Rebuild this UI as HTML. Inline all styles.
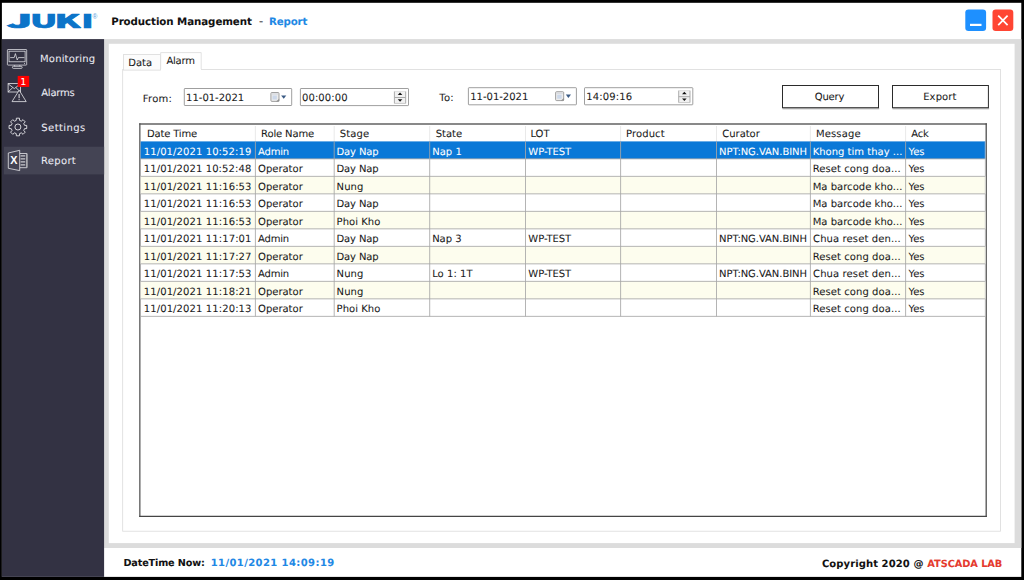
<!DOCTYPE html>
<html lang="en"><head><meta charset="utf-8"><title>Production Management - Report</title>
<style>
html,body{margin:0;padding:0;background:#000;}
body{width:1024px;height:580px;overflow:hidden;position:relative;font-family:"DejaVu Sans", "Liberation Sans", sans-serif;font-size:10px;color:#1a1a1a;}
#app{position:absolute;left:0;top:0;width:1024px;height:580px;overflow:hidden;}
#shapes{position:absolute;left:0;top:0;}
.g{position:absolute;left:0;top:0;width:0;height:0;}
.t{position:absolute;white-space:pre;line-height:12px;height:12px;text-rendering:geometricPrecision;-webkit-text-stroke:0.06px currentColor;}
</style></head><body><div id="app">
<svg id="shapes" width="1024" height="580" viewBox="0 0 1024 580">
<rect x="0" y="0" width="1024" height="580" fill="#000"/>
<rect x="1.9" y="2.8" width="1019.4" height="574.1" fill="#fff"/>
<rect x="104.1" y="39.1" width="917.2" height="508.9" fill="#dcdcdc"/>
<rect x="108.8" y="43.8" width="905.8" height="499.3" fill="#fff"/>
<rect x="1.9" y="39.1" width="102.2" height="537.8" fill="#333243"/>
<rect x="3.9" y="146.7" width="100.2" height="27.7" fill="#444454"/>
<rect x="965.3" y="9.4" width="20.8" height="21.5" rx="3.2" fill="#1e90ff"/>
<rect x="970" y="23.8" width="11.5" height="2.2" fill="#fff"/>
<rect x="992.5" y="9.4" width="20.8" height="21.5" rx="3.2" fill="#ff4533"/>
<path d="M998.2 15.6L1007.6 25.2M1007.6 15.6L998.2 25.2" stroke="#fff" stroke-width="1.7" fill="none"/>
<rect x="122.7" y="69.5" width="877.7" height="461.7" fill="#fff" stroke="#dadada" stroke-width="0.8"/>
<rect x="123.4" y="54.6" width="37.1" height="15.5" fill="#fcfcfc" stroke="#dadada" stroke-width="0.8"/>
<path d="M160.7 69.9V52.6H201.2V69.9" fill="#fff" stroke="#dadada" stroke-width="0.8"/>
<rect x="161.1" y="68.9" width="39.7" height="1.4" fill="#fff"/>
<rect x="184.3" y="88.5" width="107.4" height="17" fill="#fff" stroke="#868686" stroke-width="0.8" rx="0.6"/>
<g transform="translate(270.5,92.1)"><rect x="0.4" y="0.4" width="8.1" height="8.9" rx="1" fill="#ececec" stroke="#8a8a8a" stroke-width="0.8"/><rect x="1.3" y="1.3" width="6.3" height="1.2" fill="#d4d8de"/><rect x="2" y="3.4" width="4.4" height="4" fill="#c9d6ea" opacity="0.9"/><path d="M5.6 9.5L8.7 6.6V9.5Z" fill="#8f8f8f"/></g>
<path d="M281.1 95.4h5.2l-2.6 3.3z" fill="#3a5a84"/>
<rect x="300.4" y="88.5" width="108.1" height="17.1" fill="#fff" stroke="#868686" stroke-width="0.8" rx="0.6"/>
<rect x="394.4" y="91.4" width="11.3" height="12" fill="#f1f1f1"/>
<line x1="394.4" y1="91.4" x2="394.4" y2="103.4" stroke="#a4a4a4" stroke-width="0.9"/>
<line x1="405.7" y1="91.4" x2="405.7" y2="103.4" stroke="#a4a4a4" stroke-width="0.9"/>
<line x1="394.4" y1="103.4" x2="405.7" y2="103.4" stroke="#bdbdbd" stroke-width="0.8"/>
<line x1="394.4" y1="91.4" x2="405.7" y2="91.4" stroke="#d6d6d6" stroke-width="0.7"/>
<line x1="394.4" y1="97.5" x2="405.7" y2="97.5" stroke="#a9a9a9" stroke-width="1"/>
<path d="M397.75 95h4.6l-2.3 -2.5z" fill="#111"/>
<path d="M397.75 99.2h4.6l-2.3 2.6z" fill="#111"/>
<rect x="468.4" y="87.7" width="108" height="17.1" fill="#fff" stroke="#868686" stroke-width="0.8" rx="0.6"/>
<g transform="translate(555.2,91.3)"><rect x="0.4" y="0.4" width="8.1" height="8.9" rx="1" fill="#ececec" stroke="#8a8a8a" stroke-width="0.8"/><rect x="1.3" y="1.3" width="6.3" height="1.2" fill="#d4d8de"/><rect x="2" y="3.4" width="4.4" height="4" fill="#c9d6ea" opacity="0.9"/><path d="M5.6 9.5L8.7 6.6V9.5Z" fill="#8f8f8f"/></g>
<path d="M565.8 94.6h5.2l-2.6 3.3z" fill="#3a5a84"/>
<rect x="584.5" y="87.7" width="108.3" height="17.1" fill="#fff" stroke="#868686" stroke-width="0.8" rx="0.6"/>
<rect x="678.7" y="90.6" width="11.3" height="12" fill="#f1f1f1"/>
<line x1="678.7" y1="90.6" x2="678.7" y2="102.6" stroke="#a4a4a4" stroke-width="0.9"/>
<line x1="690" y1="90.6" x2="690" y2="102.6" stroke="#a4a4a4" stroke-width="0.9"/>
<line x1="678.7" y1="102.6" x2="690" y2="102.6" stroke="#bdbdbd" stroke-width="0.8"/>
<line x1="678.7" y1="90.6" x2="690" y2="90.6" stroke="#d6d6d6" stroke-width="0.7"/>
<line x1="678.7" y1="96.7" x2="690" y2="96.7" stroke="#a9a9a9" stroke-width="1"/>
<path d="M682.05 94.2h4.6l-2.3 -2.5z" fill="#111"/>
<path d="M682.05 98.4h4.6l-2.3 2.6z" fill="#111"/>
<line x1="782.5" y1="108.8" x2="879.3" y2="108.8" stroke="#9a9a9a" stroke-width="0.9"/>
<rect x="782.5" y="85.5" width="96" height="22.2" fill="#fff" stroke="#2b2b2b" stroke-width="1"/>
<line x1="892.5" y1="108.8" x2="989.2" y2="108.8" stroke="#9a9a9a" stroke-width="0.9"/>
<rect x="892.5" y="85.5" width="95.9" height="22.2" fill="#fff" stroke="#2b2b2b" stroke-width="1"/>
<rect x="139.3" y="123.3" width="847.5" height="393.6" fill="#fff"/>
<line x1="139.25" y1="124.05" x2="986.8" y2="124.05" stroke="#626262" stroke-width="1.5"/>
<line x1="139.85" y1="123.3" x2="139.85" y2="516.95" stroke="#525252" stroke-width="1.25"/>
<line x1="986.2" y1="123.3" x2="986.2" y2="516.95" stroke="#4e4e4e" stroke-width="1.3"/>
<line x1="139.25" y1="516.4" x2="986.8" y2="516.4" stroke="#454545" stroke-width="1.1"/>
<line x1="255.4" y1="126" x2="255.4" y2="141" stroke="#e6e6e6" stroke-width="0.9"/>
<line x1="334.2" y1="126" x2="334.2" y2="141" stroke="#e6e6e6" stroke-width="0.9"/>
<line x1="429.7" y1="126" x2="429.7" y2="141" stroke="#e6e6e6" stroke-width="0.9"/>
<line x1="525.5" y1="126" x2="525.5" y2="141" stroke="#e6e6e6" stroke-width="0.9"/>
<line x1="620.6" y1="126" x2="620.6" y2="141" stroke="#e6e6e6" stroke-width="0.9"/>
<line x1="716.5" y1="126" x2="716.5" y2="141" stroke="#e6e6e6" stroke-width="0.9"/>
<line x1="810.4" y1="126" x2="810.4" y2="141" stroke="#e6e6e6" stroke-width="0.9"/>
<line x1="905.6" y1="126" x2="905.6" y2="141" stroke="#e6e6e6" stroke-width="0.9"/>
<rect x="140.65" y="141.4" width="844.85" height="17.5" fill="#0a78d7"/>
<rect x="140.65" y="176.4" width="844.85" height="17.5" fill="#fdfdee"/>
<rect x="140.65" y="211.4" width="844.85" height="17.5" fill="#fdfdee"/>
<rect x="140.65" y="246.4" width="844.85" height="17.5" fill="#fdfdee"/>
<rect x="140.65" y="281.4" width="844.85" height="17.5" fill="#fdfdee"/>
<line x1="140.65" y1="158.85" x2="985.5" y2="158.85" stroke="#a6a6a6" stroke-width="0.85"/>
<line x1="140.65" y1="176.35" x2="985.5" y2="176.35" stroke="#a6a6a6" stroke-width="0.85"/>
<line x1="140.65" y1="193.85" x2="985.5" y2="193.85" stroke="#a6a6a6" stroke-width="0.85"/>
<line x1="140.65" y1="211.35" x2="985.5" y2="211.35" stroke="#a6a6a6" stroke-width="0.85"/>
<line x1="140.65" y1="228.85" x2="985.5" y2="228.85" stroke="#a6a6a6" stroke-width="0.85"/>
<line x1="140.65" y1="246.35" x2="985.5" y2="246.35" stroke="#a6a6a6" stroke-width="0.85"/>
<line x1="140.65" y1="263.85" x2="985.5" y2="263.85" stroke="#a6a6a6" stroke-width="0.85"/>
<line x1="140.65" y1="281.35" x2="985.5" y2="281.35" stroke="#a6a6a6" stroke-width="0.85"/>
<line x1="140.65" y1="298.85" x2="985.5" y2="298.85" stroke="#a6a6a6" stroke-width="0.85"/>
<line x1="140.65" y1="316.35" x2="985.5" y2="316.35" stroke="#a6a6a6" stroke-width="0.85"/>
<line x1="255.4" y1="141.4" x2="255.4" y2="316.4" stroke="#a6a6a6" stroke-width="0.85"/>
<line x1="334.2" y1="141.4" x2="334.2" y2="316.4" stroke="#a6a6a6" stroke-width="0.85"/>
<line x1="429.7" y1="141.4" x2="429.7" y2="316.4" stroke="#a6a6a6" stroke-width="0.85"/>
<line x1="525.5" y1="141.4" x2="525.5" y2="316.4" stroke="#a6a6a6" stroke-width="0.85"/>
<line x1="620.6" y1="141.4" x2="620.6" y2="316.4" stroke="#a6a6a6" stroke-width="0.85"/>
<line x1="716.5" y1="141.4" x2="716.5" y2="316.4" stroke="#a6a6a6" stroke-width="0.85"/>
<line x1="810.4" y1="141.4" x2="810.4" y2="316.4" stroke="#a6a6a6" stroke-width="0.85"/>
<line x1="905.6" y1="141.4" x2="905.6" y2="316.4" stroke="#a6a6a6" stroke-width="0.85"/>
<line x1="985.2" y1="141.4" x2="985.2" y2="316.4" stroke="#c8c8c8" stroke-width="0.6"/>
<g fill="none" stroke="#e6e6ea" stroke-width="0.75"><rect x="7.4" y="49.5" width="19.3" height="15.6" rx="0.6"/><rect x="9" y="51.2" width="16.1" height="10.6"/><path d="M10.2 57.6h4l1.2 -4 1.8 6.4 1.2 -2.4h6"/><path d="M24 63.6h1"/><rect x="12.4" y="66.3" width="9.8" height="2.1" rx="1"/><path d="M14.6 65.2v1.1M19.8 65.2v1.1"/></g>
<g fill="none" stroke="#e6e6ea" stroke-width="0.8"><rect x="8.1" y="83.6" width="12.4" height="8.4"/><path d="M8.1 83.8l6.2 4.8 6.2 -4.8M8.1 92l4.6 -4.4M20.5 92l-4.6 -4.4"/><path d="M19.2 90.2L26.2 101.6H12L19.2 90.2Z" fill="#333243"/><path d="M19.1 94v4.2M19.1 99.2v1" stroke-width="1"/></g>
<rect x="17.7" y="75.9" width="11.5" height="11" fill="#ff0000"/>
<g fill="none" stroke="#e6e6ea" stroke-width="0.9" stroke-linejoin="round"><path d="M16.36 118.18 L19.44 118.18 L19.59 120.41 L21.36 121.15 L23.05 119.68 L25.22 121.85 L23.75 123.54 L24.49 125.31 L26.72 125.46 L26.72 128.54 L24.49 128.69 L23.75 130.46 L25.22 132.15 L23.05 134.32 L21.36 132.85 L19.59 133.59 L19.44 135.82 L16.36 135.82 L16.21 133.59 L14.44 132.85 L12.75 134.32 L10.58 132.15 L12.05 130.46 L11.31 128.69 L9.08 128.54 L9.08 125.46 L11.31 125.31 L12.05 123.54 L10.58 121.85 L12.75 119.68 L14.44 121.15 L16.21 120.41Z"/><circle cx="17.9" cy="127.0" r="3.0"/></g>
<g fill="none" stroke="#e6e6ea" stroke-width="0.8" stroke-linejoin="round"><path d="M8.3 153L19.7 150.3V170.6L8.3 168.3Z"/><path d="M19.9 153.5h7.1v14.2h-7.1"/><path d="M20.6 155.9h4.6M20.6 158.9h4.6M20.6 161.9h4.6M20.6 164.9h4.6" stroke-width="1.1" stroke="#c9c9ce"/><path d="M26.6 153.7v13.8" stroke-width="1.3" stroke="#a9a9ae"/></g>
<text x="10.3" y="164.1" textLength="7.2" lengthAdjust="spacingAndGlyphs" fill="#fff" style="font:bold 10px 'Liberation Sans','DejaVu Sans',sans-serif">X</text>
</svg>
<svg class="logo" style="position:absolute;left:0;top:0" width="104" height="39" viewBox="0 0 104 39"><g fill="#0b74c9" stroke="#0b74c9" stroke-width="0.7" stroke-linejoin="miter" stroke-miterlimit="2" style="font:900 18.13px 'Noto Sans CJK JP','Liberation Sans',sans-serif"><text transform="translate(6.87 28.10) scale(2.403 1)" x="0" y="0">J</text><text transform="translate(30.16 28.10) scale(1.943 1)" x="0" y="0">U</text><text transform="translate(54.83 28.10) scale(2.001 1)" x="0" y="0">K</text><text transform="translate(81.39 28.10) scale(1.877 1)" x="0" y="0">I</text></g><text x="92.6" y="19.3" style="font:6.6px 'Liberation Sans',sans-serif" fill="#5aa0dc">®</text></svg>
<header class="g header">
<span class="t" style="left:111.20px;top:16px;font-size:10.25px;font-weight:bold;color:#111;letter-spacing:-0.07px;">Production Management</span>
<span class="t" style="left:258.95px;top:15px;font-size:11.5px;color:#3d3d3d;">-</span>
<span class="t" style="left:268.95px;top:16px;font-size:10.25px;font-weight:bold;color:#1e88e5;letter-spacing:-0.16px;">Report</span>
</header>
<nav class="g nav">
<span class="t" style="left:40.05px;top:54px;color:#ebebf3;letter-spacing:0.17px;">Monitoring</span>
<span class="t" style="left:41.24px;top:88px;color:#ebebf3;letter-spacing:-0.22px;">Alarms</span>
<span class="t" style="left:41.35px;top:123px;color:#ebebf3;letter-spacing:0.42px;">Settings</span>
<span class="t" style="left:41.05px;top:156px;color:#ebebf3;letter-spacing:0.31px;">Report</span>
<span class="t" style="left:20.35px;top:77px;font-size:9.5px;color:#fff;">1</span>
</nav>
<div class="g tabs">
<span class="t" style="left:128.20px;top:58px;letter-spacing:0.05px;">Data</span>
<span class="t" style="left:166.40px;top:56px;letter-spacing:-0.22px;">Alarm</span>
</div>
<div class="g filters">
<span class="t" style="left:142.85px;top:94px;letter-spacing:0.23px;">From:</span>
<span class="t" style="left:186.10px;top:93px;letter-spacing:-0.01px;">11-01-2021</span>
<span class="t" style="left:302.00px;top:93px;letter-spacing:0.09px;">00:00:00</span>
<span class="t" style="left:439.20px;top:93px;letter-spacing:0.31px;">To:</span>
<span class="t" style="left:470.25px;top:92px;letter-spacing:-0.01px;">11-01-2021</span>
<span class="t" style="left:586.35px;top:92px;letter-spacing:0.14px;">14:09:16</span>
<span class="t" style="left:814.75px;top:92px;letter-spacing:-0.19px;">Query</span>
<span class="t" style="left:923.20px;top:92px;letter-spacing:0.11px;">Export</span>
</div>
<div class="g grid">
<span class="t" style="left:147.05px;top:129px;letter-spacing:-0.19px;">Date Time</span>
<span class="t" style="left:261.05px;top:129px;letter-spacing:-0.13px;">Role Name</span>
<span class="t" style="left:339.75px;top:129px;letter-spacing:0.11px;">Stage</span>
<span class="t" style="left:435.75px;top:129px;letter-spacing:-0.03px;">State</span>
<span class="t" style="left:530.45px;top:129px;letter-spacing:-0.04px;">LOT</span>
<span class="t" style="left:626.05px;top:129px;letter-spacing:0.10px;">Product</span>
<span class="t" style="left:722.35px;top:129px;letter-spacing:-0.04px;">Curator</span>
<span class="t" style="left:815.95px;top:129px;letter-spacing:0.14px;">Message</span>
<span class="t" style="left:911.29px;top:129px;letter-spacing:-0.22px;">Ack</span>
<span class="t" style="left:143.75px;top:147px;color:#fff;letter-spacing:0.10px;">11/01/2021 10:52:19</span>
<span class="t" style="left:258.07px;top:147px;color:#fff;letter-spacing:-0.22px;">Admin</span>
<span class="t" style="left:336.55px;top:147px;color:#fff;letter-spacing:-0.14px;">Day Nap</span>
<span class="t" style="left:432.15px;top:147px;color:#fff;letter-spacing:0.04px;">Nap 1</span>
<span class="t" style="left:528.35px;top:147px;color:#fff;letter-spacing:-0.08px;">WP-TEST</span>
<span class="t" style="left:719.05px;top:147px;color:#fff;letter-spacing:-0.06px;">NPT:NG.VAN.BINH</span>
<span class="t" style="left:812.65px;top:147px;color:#fff;letter-spacing:0.01px;">Khong tim thay ...</span>
<span class="t" style="left:908.55px;top:147px;color:#fff;letter-spacing:-0.12px;">Yes</span>
<span class="t" style="left:143.75px;top:164px;letter-spacing:0.10px;">11/01/2021 10:52:48</span>
<span class="t" style="left:258.05px;top:164px;letter-spacing:-0.01px;">Operator</span>
<span class="t" style="left:336.55px;top:164px;letter-spacing:-0.14px;">Day Nap</span>
<span class="t" style="left:812.65px;top:164px;letter-spacing:0.08px;">Reset cong doa...</span>
<span class="t" style="left:908.55px;top:164px;letter-spacing:-0.12px;">Yes</span>
<span class="t" style="left:143.75px;top:182px;letter-spacing:0.11px;">11/01/2021 11:16:53</span>
<span class="t" style="left:258.05px;top:182px;letter-spacing:-0.01px;">Operator</span>
<span class="t" style="left:336.55px;top:182px;letter-spacing:0.11px;">Nung</span>
<span class="t" style="left:812.65px;top:182px;letter-spacing:0.03px;">Ma barcode kho...</span>
<span class="t" style="left:908.55px;top:182px;letter-spacing:-0.12px;">Yes</span>
<span class="t" style="left:143.75px;top:199px;letter-spacing:0.11px;">11/01/2021 11:16:53</span>
<span class="t" style="left:258.05px;top:199px;letter-spacing:-0.01px;">Operator</span>
<span class="t" style="left:336.55px;top:199px;letter-spacing:-0.14px;">Day Nap</span>
<span class="t" style="left:812.65px;top:199px;letter-spacing:0.03px;">Ma barcode kho...</span>
<span class="t" style="left:908.55px;top:199px;letter-spacing:-0.12px;">Yes</span>
<span class="t" style="left:143.75px;top:217px;letter-spacing:0.11px;">11/01/2021 11:16:53</span>
<span class="t" style="left:258.05px;top:217px;letter-spacing:-0.01px;">Operator</span>
<span class="t" style="left:336.55px;top:217px;letter-spacing:0.05px;">Phoi Kho</span>
<span class="t" style="left:812.65px;top:217px;letter-spacing:0.03px;">Ma barcode kho...</span>
<span class="t" style="left:908.55px;top:217px;letter-spacing:-0.12px;">Yes</span>
<span class="t" style="left:143.75px;top:234px;letter-spacing:0.11px;">11/01/2021 11:17:01</span>
<span class="t" style="left:258.07px;top:234px;letter-spacing:-0.22px;">Admin</span>
<span class="t" style="left:336.55px;top:234px;letter-spacing:-0.14px;">Day Nap</span>
<span class="t" style="left:432.15px;top:234px;letter-spacing:-0.01px;">Nap 3</span>
<span class="t" style="left:528.35px;top:234px;letter-spacing:-0.08px;">WP-TEST</span>
<span class="t" style="left:719.05px;top:234px;letter-spacing:-0.06px;">NPT:NG.VAN.BINH</span>
<span class="t" style="left:813.05px;top:234px;letter-spacing:0.11px;">Chua reset den...</span>
<span class="t" style="left:908.55px;top:234px;letter-spacing:-0.12px;">Yes</span>
<span class="t" style="left:143.75px;top:252px;letter-spacing:0.11px;">11/01/2021 11:17:27</span>
<span class="t" style="left:258.05px;top:252px;letter-spacing:-0.01px;">Operator</span>
<span class="t" style="left:336.55px;top:252px;letter-spacing:-0.14px;">Day Nap</span>
<span class="t" style="left:812.65px;top:252px;letter-spacing:0.08px;">Reset cong doa...</span>
<span class="t" style="left:908.55px;top:252px;letter-spacing:-0.12px;">Yes</span>
<span class="t" style="left:143.75px;top:269px;letter-spacing:0.11px;">11/01/2021 11:17:53</span>
<span class="t" style="left:258.07px;top:269px;letter-spacing:-0.22px;">Admin</span>
<span class="t" style="left:336.55px;top:269px;letter-spacing:0.11px;">Nung</span>
<span class="t" style="left:432.15px;top:269px;letter-spacing:0.06px;">Lo 1: 1T</span>
<span class="t" style="left:528.35px;top:269px;letter-spacing:-0.08px;">WP-TEST</span>
<span class="t" style="left:719.05px;top:269px;letter-spacing:-0.06px;">NPT:NG.VAN.BINH</span>
<span class="t" style="left:813.05px;top:269px;letter-spacing:0.11px;">Chua reset den...</span>
<span class="t" style="left:908.55px;top:269px;letter-spacing:-0.12px;">Yes</span>
<span class="t" style="left:143.75px;top:287px;letter-spacing:0.11px;">11/01/2021 11:18:21</span>
<span class="t" style="left:258.05px;top:287px;letter-spacing:-0.01px;">Operator</span>
<span class="t" style="left:336.55px;top:287px;letter-spacing:0.11px;">Nung</span>
<span class="t" style="left:812.65px;top:287px;letter-spacing:0.08px;">Reset cong doa...</span>
<span class="t" style="left:908.55px;top:287px;letter-spacing:-0.12px;">Yes</span>
<span class="t" style="left:143.75px;top:304px;letter-spacing:0.11px;">11/01/2021 11:20:13</span>
<span class="t" style="left:258.05px;top:304px;letter-spacing:-0.01px;">Operator</span>
<span class="t" style="left:336.55px;top:304px;letter-spacing:0.05px;">Phoi Kho</span>
<span class="t" style="left:812.65px;top:304px;letter-spacing:0.08px;">Reset cong doa...</span>
<span class="t" style="left:908.55px;top:304px;letter-spacing:-0.12px;">Yes</span>
</div>
<footer class="g footer">
<span class="t" style="left:123.45px;top:558px;font-size:9.7px;font-weight:bold;color:#111;letter-spacing:-0.16px;">DateTime Now:</span>
<span class="t" style="left:210.65px;top:558px;font-weight:bold;color:#1e88e5;letter-spacing:0.41px;">11/01/2021 14:09:19</span>
<span class="t" style="left:821.95px;top:559px;font-weight:bold;color:#111;letter-spacing:0.09px;">Copyright 2020 @</span>
<span class="t" style="left:927.35px;top:559px;font-size:9.8px;font-weight:bold;color:#e53a2e;letter-spacing:-0.08px;">ATSCADA LAB</span>
</footer>
</div></body></html>
